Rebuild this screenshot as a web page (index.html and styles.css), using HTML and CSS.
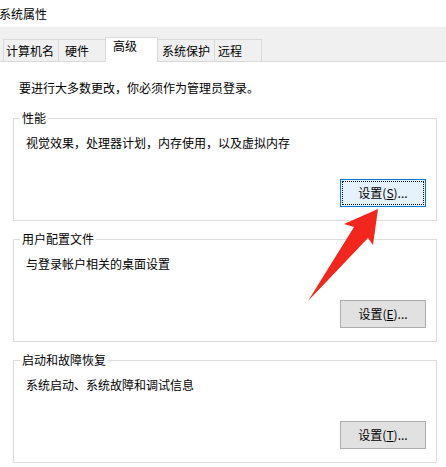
FILE: index.html
```html
<!DOCTYPE html>
<html lang="zh-CN">
<head>
<meta charset="utf-8">
<title>系统属性</title>
<link rel="stylesheet" href="styles.css">
</head>
<body>
<div class="window">
  <div class="titlebar"><span class="title">系统属性</span></div>
  <div class="tabstrip">
    <div class="tab tab-computer">计算机名</div>
    <div class="tab tab-hardware">硬件</div>
    <div class="tab tab-advanced is-active">高级</div>
    <div class="tab tab-protect">系统保护</div>
    <div class="tab tab-remote">远程</div>
  </div>
  <div class="panel">
    <p class="note">要进行大多数更改，你必须作为管理员登录。</p>
    <div class="groups">
      <fieldset class="group">
        <legend class="group-title">性能</legend>
        <p class="group-desc">视觉效果，处理器计划，内存使用，以及虚拟内存</p>
        <div class="group-actions"><button class="btn btn-focus" type="button">设置(<u>S</u>)...</button></div>
      </fieldset>
      <fieldset class="group">
        <legend class="group-title">用户配置文件</legend>
        <p class="group-desc">与登录帐户相关的桌面设置</p>
        <div class="group-actions"><button class="btn" type="button">设置(<u>E</u>)...</button></div>
      </fieldset>
      <fieldset class="group">
        <legend class="group-title">启动和故障恢复</legend>
        <p class="group-desc">系统启动、系统故障和调试信息</p>
        <div class="group-actions"><button class="btn" type="button">设置(<u>T</u>)...</button></div>
      </fieldset>
    </div>
  </div>
  <svg class="arrow" viewBox="0 0 446 467" width="446" height="467" aria-hidden="true">
    <polygon points="378,209 344,224 354,227 308,301 368,238 373,245" fill="#f3261d"/>
  </svg>
</div>
</body>
</html>
```

FILE: styles.css
```css
* { box-sizing: border-box; }

html, body {
  margin: 0;
  padding: 0;
  background: #ffffff;
}

body {
  font-family: "Noto Sans CJK SC", "Noto Sans", sans-serif;
  font-size: 12px;
  line-height: 16px;
  color: #000000;
}

.window {
  position: relative;
  width: 446px;
  height: 467px;
  overflow: hidden;
  background: #ffffff;
}

.titlebar {
  height: 27px;
  line-height: 27px;
  background: #ffffff;
}

.title {
  display: inline-block;
  margin-left: -1px;
}

.tabstrip {
  display: flex;
  align-items: flex-end;
  height: 35px;
  padding-left: 3px;
  background: #f0f0f0;
  border-bottom: 1px solid #d9d9d9;
}

.tab {
  height: 22px;
  padding-top: 3px;
  background: #f0f0f0;
  border: 1px solid #d9d9d9;
  border-bottom: none;
  white-space: nowrap;
}

.tab + .tab { margin-left: -1px; }

.tab.is-active {
  height: 25px;
  padding-top: 0;
  margin-bottom: -1px;
  background: #ffffff;
  position: relative;
  z-index: 1;
}

.tab-computer { width: 56px; padding-left: 2px; }
.tab-hardware { width: 48px; padding-left: 6px; }
.tab-advanced { width: 53px; padding-left: 7px; }
.tab-protect  { width: 58px; padding-left: 4px; }
.tab-remote   { width: 48px; padding-left: 3px; }

.panel {
  padding: 18px 9px 0 13px;
}

.note {
  margin: 0 0 14px 6px;
}

.groups {
  display: flex;
  flex-direction: column;
  gap: 10px;
}

.group {
  margin: 0;
  width: 424px;
  min-width: 0;
  padding: 9px 10px 13px 12px;
  border: 1px solid #dcdcdc;
}

.group-title {
  margin-left: -6px;
  padding: 0 2px;
  line-height: 16px;
}

.group-desc {
  margin: 0;
}

.group-actions {
  display: flex;
  justify-content: flex-end;
  margin-top: 28px;
}

.btn {
  width: 86px;
  height: 28px;
  padding: 0;
  font-family: inherit;
  font-size: 12px;
  line-height: 16px;
  color: #000000;
  background: #e1e1e1;
  border: 1px solid #adadad;
  border-radius: 0;
}

.btn u { text-underline-offset: 1px; }

.btn-focus {
  background: #e5f1fb;
  border-color: #0078d7;
  outline: 1px dotted #000000;
  outline-offset: -3px;
}

.arrow {
  position: absolute;
  top: 0;
  left: 0;
  pointer-events: none;
}
```
